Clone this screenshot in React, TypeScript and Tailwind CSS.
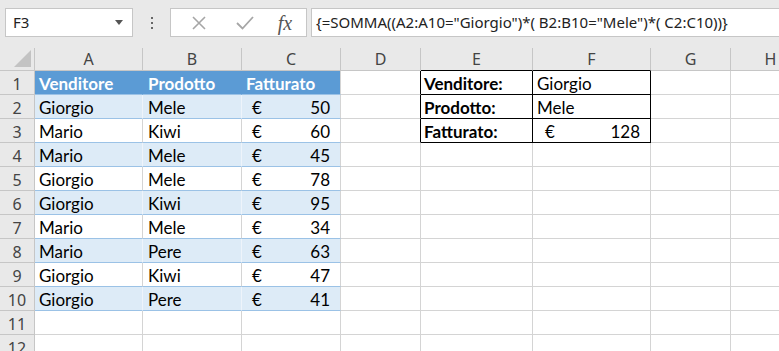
const rows: [string, string, number][] = [
  ['Giorgio', 'Mele', 50],
  ['Mario', 'Kiwi', 60],
  ['Mario', 'Mele', 45],
  ['Giorgio', 'Mele', 78],
  ['Giorgio', 'Kiwi', 95],
  ['Mario', 'Mele', 34],
  ['Mario', 'Pere', 63],
  ['Giorgio', 'Kiwi', 47],
  ['Giorgio', 'Pere', 41],
];

const letters = ['A', 'B', 'C', 'D', 'E', 'F', 'G', 'H'];

const cellFont = "font-['Lato',sans-serif] text-[17px] leading-[20px]";
const uiFont = "font-['Noto_Sans',sans-serif]";

function Toolbar() {
  return (
    <div className="flex h-[48px] items-start bg-[#e9e9e9] pt-[8px] pl-[5px]">
      <div className="flex h-[29px] w-[128px] items-center justify-between border border-[#c6c6c6] bg-white pl-[7px] pr-[9px]">
        <span className={`${uiFont} text-[15px] text-[#222]`}>F3</span>
        <svg width="8" height="5" viewBox="0 0 8 5">
          <path d="M0 0 L8 0 L4 5 Z" fill="#555" />
        </svg>
      </div>
      <div className="flex h-[29px] w-[37px] items-center justify-center">
        <svg width="4" height="12" viewBox="0 0 4 12">
          <rect x="1" y="0" width="2" height="2" fill="#666" />
          <rect x="1" y="5" width="2" height="2" fill="#666" />
          <rect x="1" y="10" width="2" height="2" fill="#666" />
        </svg>
      </div>
      <div className="flex h-[29px] w-[137px] items-center border border-[#c6c6c6] bg-white">
        <div className="flex w-[54px] justify-center pl-[2px]">
          <svg width="16" height="16" viewBox="0 0 16 16">
            <path d="M2 2 L14 14 M14 2 L2 14" stroke="#a6a6a6" strokeWidth="1.6" fill="none" />
          </svg>
        </div>
        <div className="flex w-[40px] justify-center">
          <svg width="18" height="16" viewBox="0 0 18 16">
            <path d="M1 8 L6.5 13.5 L17 2" stroke="#a6a6a6" strokeWidth="1.8" fill="none" />
          </svg>
        </div>
        <div className="flex w-[40px] justify-center">
          <span className="font-['Liberation_Serif',serif] text-[20px] italic leading-none text-[#555]">fx</span>
        </div>
      </div>
      <div className="ml-[4px] flex h-[29px] flex-1 items-center border border-r-0 border-[#c6c6c6] bg-white pl-[4px]">
        <span className={`${uiFont} whitespace-nowrap text-[15px] text-[#222]`}>
          {'{=SOMMA((A2:A10="Giorgio")*( B2:B10="Mele")*( C2:C10))}'}
        </span>
      </div>
    </div>
  );
}

function HeaderRow() {
  return (
    <>
      <div className="relative h-[23px] border-r border-b border-[#c6c6c6] bg-[#e9e9e9]">
        <svg className="absolute right-[3px] bottom-[3px]" width="17" height="17" viewBox="0 0 17 17">
          <path d="M17 0 L17 17 L0 17 Z" fill="#c3c3c3" />
        </svg>
      </div>
      {letters.map((l, i) => (
        <div
          key={l}
          className={`flex h-[23px] items-start justify-center border-r border-b bg-[#e9e9e9] ${
            i === 4 || i === 5 ? 'border-b-black border-r-[#c6c6c6]' : 'border-[#c6c6c6]'
          }`}
        >
          <span className={`${uiFont} text-[16px] leading-[22px] text-[#444]`}>{l}</span>
        </div>
      ))}
    </>
  );
}

function RowNum({ n }: { n: number }) {
  return (
    <div className="flex h-[24px] items-end justify-center border-r border-b border-[#c6c6c6] bg-[#e9e9e9]">
      <span className={`${uiFont} text-[16px] leading-[20px] text-[#444]`}>{n}</span>
    </div>
  );
}

function Money({ v, bold = false }: { v: number; bold?: boolean }) {
  return (
    <div className={`flex w-full justify-between pl-[10px] pr-[10px] ${bold ? 'font-bold' : ''}`}>
      <span>€</span>
      <span>{v}</span>
    </div>
  );
}

const summary: Record<number, [string, React.ReactNode]> = {
  1: ['Venditore:', 'Giorgio'],
  2: ['Prodotto:', 'Mele'],
  3: ['Fatturato:', <div className="flex w-full justify-between pl-[8px]"><span>€</span><span>128</span></div>],
};

function Row({ n }: { n: number }) {
  const d = n >= 2 && n <= 10 ? rows[n - 2] : null;
  const header = n === 1;
  const band = d && n % 2 === 0;
  const tableBg = header ? 'bg-[#5b9bd5] text-white font-bold' : band ? 'bg-[#ddebf7]' : 'bg-white';
  const tableBorderB = header ? 'border-b-[#9bc2e6]' : n === 10 || d ? 'border-b-[#9bc2e6]' : 'border-b-[#d4d4d4]';
  const inTable = header || d;
  const inner = header ? 'border-r-[#5b9bd5]' : band ? 'border-r-[#eef4fb]' : 'border-r-[#d4d4d4]';
  const base = `flex h-[24px] items-end overflow-hidden border-r border-b whitespace-nowrap text-black ${cellFont}`;
  const s = summary[n];

  const aText = header ? 'Venditore' : d ? d[0] : '';
  const bText = header ? 'Prodotto' : d ? d[1] : '';

  return (
    <>
      <RowNum n={n} />
      <div className={`${base} pl-[4px] ${inTable ? `${tableBg} ${tableBorderB} ${inner}` : 'border-[#d4d4d4]'}`}>{aText}</div>
      <div className={`${base} pl-[5px] ${inTable ? `${tableBg} ${tableBorderB} ${inner}` : 'border-[#d4d4d4]'}`}>{bText}</div>
      <div className={`${base} ${inTable ? `${tableBg} ${tableBorderB} border-r-[#d4d4d4]` : 'border-[#d4d4d4]'} ${header ? 'pl-[4px]' : ''}`}>
        {header ? 'Fatturato' : d ? <Money v={d[2]} /> : ''}
      </div>
      <div className={`${base} border-b-[#d4d4d4] ${s ? 'border-r-black' : 'border-r-[#d4d4d4]'}`} />
      <div className={`${base} pl-[3px] font-bold ${s ? 'border-black' : 'border-[#d4d4d4]'}`}>{s ? s[0] : ''}</div>
      <div className={`${base} pl-[4px] pr-[10px] ${s ? 'border-black' : 'border-[#d4d4d4]'}`}>{s ? s[1] : ''}</div>
      <div className={`${base} border-[#d4d4d4]`} />
      <div className={`${base} border-[#d4d4d4]`} />
    </>
  );
}

export default function App() {
  return (
    <div className="h-[351px] w-[779px] overflow-hidden bg-white">
      <Toolbar />
      <div className="grid w-[811px] grid-cols-[35px_108px_99px_99px_80px_112px_118px_80px_80px]">
        <HeaderRow />
        {Array.from({ length: 12 }, (_, i) => (
          <Row key={i} n={i + 1} />
        ))}
      </div>
    </div>
  );
}
